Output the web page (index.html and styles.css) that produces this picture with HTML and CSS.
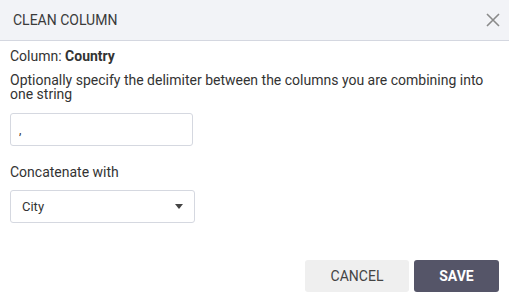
FILE: index.html
```html
<!DOCTYPE html>
<html lang="en">
<head>
  <meta charset="UTF-8">
  <title>Clean Column</title>
  <link rel="stylesheet" href="styles.css">
</head>
<body>
  <div class="dialog">
    <div class="dialog-header">
      <span class="dialog-title">CLEAN COLUMN</span>
      <button class="close-btn" type="button" aria-label="Close">
        <svg width="14" height="14" viewBox="0 0 14 14">
          <path d="M1 1 L13 13 M13 1 L1 13" stroke="#8a8a8a" stroke-width="1.6" fill="none"/>
        </svg>
      </button>
    </div>

    <div class="dialog-body">
      <div class="column-name">Column: <b>Country</b></div>
      <p class="hint">Optionally specify the delimiter between the columns you are combining into one string</p>
      <input class="text-input" type="text" value=",">

      <label class="field-label">Concatenate with</label>
      <div class="select-box">
        <span>City</span>
        <span class="caret"></span>
      </div>
    </div>

    <div class="dialog-footer">
      <button type="button" class="btn btn-cancel">CANCEL</button>
      <button type="button" class="btn btn-save">SAVE</button>
    </div>
  </div>
</body>
</html>
```

FILE: styles.css
```css
body {
  margin: 0;
  font-family: Roboto, 'Liberation Sans', sans-serif;
  background-color: #fff;
  color: #333;
}

.dialog {
  width: 509px;
  height: 302px;
  display: flex;
  flex-direction: column;
}

.dialog-header {
  height: 41px;
  background-color: #f2f3f7;
  border-bottom: 1px solid #d4d7e0;
  display: flex;
  align-items: center;
  justify-content: space-between;
  padding: 0 9px 0 13px;
  box-sizing: border-box;
}

.dialog-title {
  font-size: 14px;
  color: #3a3a3a;
}

.close-btn {
  background: none;
  border: none;
  padding: 0;
  width: 14px;
  height: 14px;
  display: flex;
  cursor: pointer;
}

.dialog-body {
  padding: 7px 10px 0;
  flex: 1;
  font-size: 14px;
}

.column-name {
  line-height: 17px;
}

.hint {
  margin: 8px 0 0;
  line-height: 14px;
}

.text-input {
  display: block;
  width: 183px;
  height: 33px;
  margin-top: 12px;
  box-sizing: border-box;
  border: 1px solid #d5d8e0;
  border-radius: 3px;
  padding: 0 8px;
  font-family: inherit;
  font-size: 12px;
  color: #333;
}

.field-label {
  display: block;
  margin-top: 18px;
  line-height: 17px;
}

.select-box {
  width: 185px;
  height: 33px;
  margin-top: 9px;
  box-sizing: border-box;
  border: 1px solid #d5d8e0;
  border-radius: 3px;
  padding: 0 11px 0 11px;
  display: flex;
  align-items: center;
  justify-content: space-between;
  font-size: 13px;
}

.caret {
  width: 0;
  height: 0;
  border-left: 4.5px solid transparent;
  border-right: 4.5px solid transparent;
  border-top: 5px solid #444;
}

.dialog-footer {
  display: flex;
  justify-content: flex-end;
  gap: 5px;
  padding: 0 10px 10px;
}

.btn {
  height: 32px;
  border: none;
  border-radius: 3px;
  font-family: inherit;
  font-size: 14px;
  cursor: pointer;
}

.btn-cancel {
  width: 104px;
  background-color: #efefef;
  color: #444;
}

.btn-save {
  width: 85px;
  background-color: #555568;
  color: #fff;
  font-weight: bold;
}
```
